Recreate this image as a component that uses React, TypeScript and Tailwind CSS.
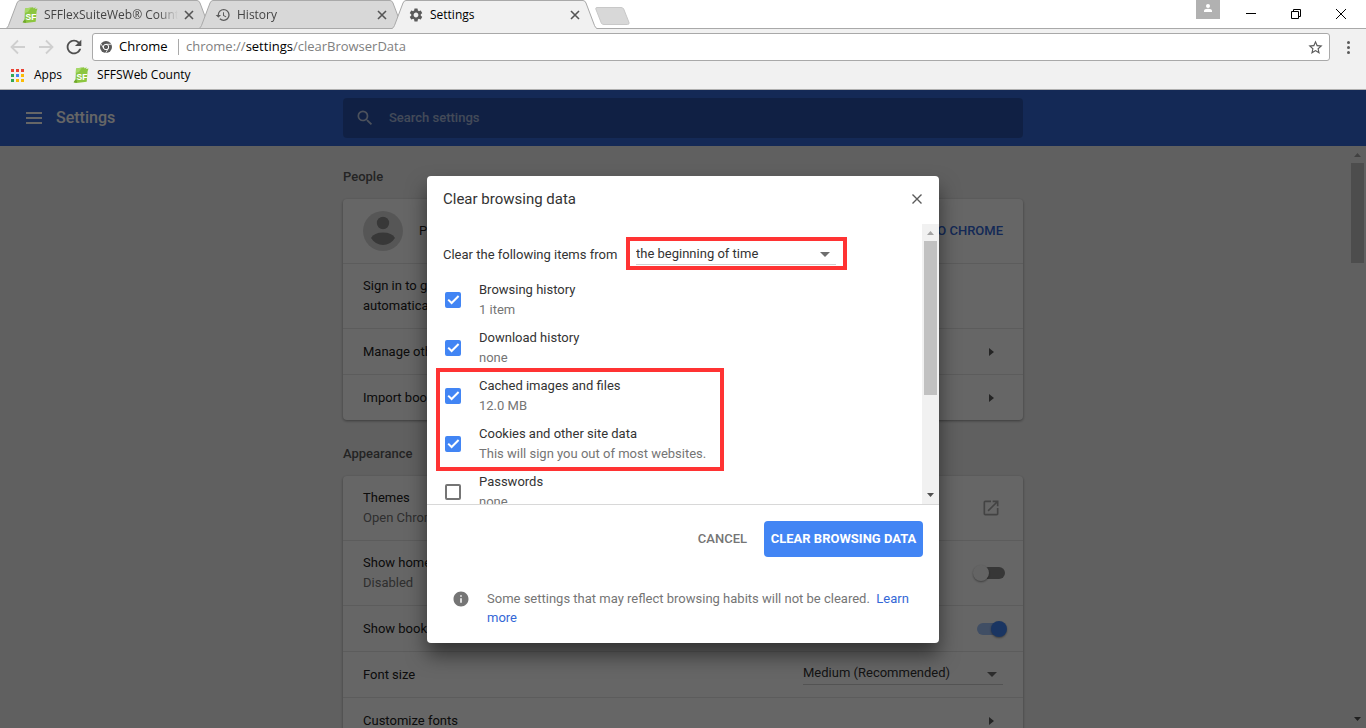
import type { ReactNode } from "react";
import { MdHistory, MdInfo, MdLaunch, MdRefresh, MdSearch, MdSettings, MdStarBorder } from "react-icons/md";

const clearItems = [
  { id: "browsing", label: "Browsing history", detail: "1 item", checked: true },
  { id: "downloads", label: "Download history", detail: "none", checked: true },
];

const flaggedItems = [
  { id: "cache", label: "Cached images and files", detail: "12.0 MB", checked: true },
  { id: "cookies", label: "Cookies and other site data", detail: "This will sign you out of most websites.", checked: true },
];

const appColors = [
  "bg-[#ea4335]", "bg-[#ea4335]", "bg-[#ea4335]",
  "bg-[#34a853]", "bg-[#4285f4]", "bg-[#fbbc05]",
  "bg-[#34a853]", "bg-[#fbbc05]", "bg-[#fbbc05]",
];

function SfIcon() {
  return (
    <svg viewBox="0 0 16 16" className="size-4 shrink-0" aria-hidden="true">
      <path d="M3 1.5 11 .3l.8 1.2L13.500 0l-.3 2 2.300-.4-.9 2.600-.9 10.500L3.600 16 .6 15.200l1.900-2.800z" fill="#8cc63f" />
      <path d="M3 1.500 9 .6 6 5 2.800 6z" fill="#a5d867" />
      <path d="M.6 15.200l2.100-2.800 1.300 1.500L3.600 16z" fill="#6fa52d" />
      <text x="3.500" y="13" fontSize="8.500" fontWeight="700" fill="#fff" fontFamily="Liberation Sans, sans-serif">
        SF
      </text>
    </svg>
  );
}

function ChromeIcon() {
  return (
    <svg viewBox="0 0 24 24" className="size-3 shrink-0" aria-hidden="true">
      <circle cx="12" cy="12" r="12" fill="#5a5a5a" />
      <circle cx="12" cy="12" r="5.4" fill="#5a5a5a" stroke="#fff" strokeWidth="2" />
      <path d="M12 6.6h11M7.3 14.7 2 5.6M16.7 14.7 11.3 24" stroke="#fff" strokeWidth="1.6" />
    </svg>
  );
}

function Tab({ icon, title, active }: { icon: ReactNode; title: string; active?: boolean }) {
  return (
    <div className={active ? "relative z-10 -mr-3 h-[29px] w-[205px]" : "relative -mr-3 h-[29px] w-[205px]"}>
      <svg viewBox="0 0 205 29" className="absolute inset-0 size-full" aria-hidden="true">
        <path
          d="M0 28.5Q1.5 28 2.5 25.5L11 3Q12 .5 14 .5H191Q193 .5 194 3L202.5 25.5Q203.5 28 205 28.5V29H0z"
          fill={active ? "#f1f1f1" : "#d8d8d8"}
        />
        <path
          d="M0 28.5Q1.5 28 2.5 25.5L11 3Q12 .5 14 .5H191Q193 .5 194 3L202.5 25.5Q203.5 28 205 28.5"
          fill="none"
          stroke="#a9a9a9"
        />
        {!active && <path d="M0 28.5h205" stroke="#a9a9a9" />}
      </svg>
      <div className="relative flex h-[29px] items-center pr-[17px] pl-4">
        <span className="flex w-[22px] text-[#5a5a5a]">{icon}</span>
        <span
          className={
            active
              ? "w-[134px] overflow-hidden text-xs whitespace-nowrap text-black"
              : "w-[134px] overflow-hidden mask-r-from-85% text-xs whitespace-nowrap text-[#444]"
          }
        >
          {title}
        </span>
        <button type="button" aria-label={`Close ${title}`} className="ml-auto text-[#555]">
          <svg viewBox="0 0 10 10" className="size-[10px]" stroke="currentColor" strokeWidth="1.6" aria-hidden="true">
            <path d="M1 1l8 8M9 1l-8 8" />
          </svg>
        </button>
      </div>
    </div>
  );
}

function TabStrip() {
  return (
    <div className="flex h-[29px] shrink-0 items-start border-b border-[#a9a9a9] bg-white pl-[6px]">
      <Tab icon={<SfIcon />} title="SFFlexSuiteWeb® County" />
      <Tab icon={<MdHistory className="size-4" />} title="History" />
      <Tab icon={<MdSettings className="size-4" />} title="Settings" active />
      <button type="button" aria-label="New tab" className="mt-[7px] ml-[10px]">
        <svg viewBox="0 0 35 18" className="h-[18px] w-[35px]" aria-hidden="true">
          <path d="M2 .5H26Q28 .5 28.7 2L34 15.5Q34.5 17.500 32.5 17.5H9Q7 17.5 6.3 16L.8 2Q.5.5 2 .5z" fill="#d8d8d8" stroke="#c8c8c8" />
        </svg>
      </button>
      <div className="ml-auto flex pr-[3px] text-black">
        <button type="button" aria-label="Profile" className="mr-2 flex h-[19px] w-6 items-start justify-center bg-[#b1b1b1] pt-1">
          <svg viewBox="0 0 8 8" className="size-2" fill="#fff" aria-hidden="true">
            <circle cx="4" cy="2" r="2" />
            <path d="M0 8V6.8Q0 4.800 4 4.800T8 6.800V8z" />
          </svg>
        </button>
        <button type="button" aria-label="Minimize" className="flex h-[27px] w-[45px] items-center justify-center">
          <svg viewBox="0 0 10 10" className="size-[10px]" stroke="currentColor" aria-hidden="true">
            <path d="M0 4.5h10" />
          </svg>
        </button>
        <button type="button" aria-label="Restore" className="flex h-[27px] w-[45px] items-center justify-center">
          <svg viewBox="0 0 10 10" className="size-[10px]" fill="none" stroke="currentColor" aria-hidden="true">
            <path d="M.5 2.500h7v7h-7zM2.500 2.500v-2h7v7h-2" />
          </svg>
        </button>
        <button type="button" aria-label="Close" className="flex h-[27px] w-[45px] items-center justify-center">
          <svg viewBox="0 0 10 10" className="size-[10px]" stroke="currentColor" aria-hidden="true">
            <path d="M0 0l10 10M10 0L0 10" />
          </svg>
        </button>
      </div>
    </div>
  );
}

function BrowserToolbar() {
  return (
    <div className="shrink-0 border-b border-[#b0b0b0] bg-[#f1f1f1] pt-1">
      <div className="flex h-7 items-center pr-4 pl-[10px]">
        <button type="button" aria-label="Back" className="mr-3 text-[#cfcfcf]">
          <svg viewBox="0 0 16 16" className="size-4" fill="none" stroke="currentColor" strokeWidth="1.8" aria-hidden="true">
            <path d="M15 8H2.5M8 1.5 1.5 8 8 14.5" />
          </svg>
        </button>
        <button type="button" aria-label="Forward" className="mr-[9px] text-[#cfcfcf]">
          <svg viewBox="0 0 16 16" className="size-4" fill="none" stroke="currentColor" strokeWidth="1.8" aria-hidden="true">
            <path d="M1 8h12.5M8 1.5 14.5 8 8 14.5" />
          </svg>
        </button>
        <button type="button" aria-label="Reload" className="mr-[7px] text-[#4f4f4f]">
          <MdRefresh className="size-[22px]" />
        </button>
        <div className="flex h-7 flex-1 items-center rounded-[3px] border border-[#a9a9a9] bg-white pr-[5px] pl-[7px] text-[13px]">
          <ChromeIcon />
          <span className="ml-[7px] w-[52px] text-black">Chrome</span>
          <span className="mx-[7px] h-4 w-px bg-[#a9a9a9]" />
          <div role="textbox" aria-label="Address" className="flex-1 text-[#808080]">
            chrome://<span className="text-black">settings</span>/clearBrowserData
          </div>
          <button type="button" aria-label="Bookmark this page" className="text-[#5a5a5a]">
            <MdStarBorder className="size-[17px]" />
          </button>
        </div>
        <button type="button" aria-label="Menu" className="ml-[17px] flex flex-col gap-[2px]">
          <span className="size-[3px] rounded-full bg-[#5a5a5a]" />
          <span className="size-[3px] rounded-full bg-[#5a5a5a]" />
          <span className="size-[3px] rounded-full bg-[#5a5a5a]" />
        </button>
      </div>
      <nav className="flex h-7 items-center gap-[11px] pl-[11px] text-xs text-black">
        <a href="#apps" className="flex items-center gap-[10px]">
          <span className="grid grid-cols-3 gap-[2px]">
            {appColors.map((color, i) => (
              <span key={i} className={`size-[3px] ${color}`} />
            ))}
          </span>
          Apps
        </a>
        <a href="#county" className="flex items-center gap-2">
          <SfIcon />
          SFFSWeb County
        </a>
      </nav>
    </div>
  );
}

function Row({ title, detail, children }: { title: string; detail?: string; children?: ReactNode }) {
  return (
    <div
      className={
        detail
          ? "flex h-[65px] items-center border-t border-black/10 px-5 first:h-16 first:border-t-0"
          : "flex h-[46px] items-center border-t border-black/10 px-5"
      }
    >
      <div className="flex-1">
        <div>{title}</div>
        {detail && <div className="text-[#757575]">{detail}</div>}
      </div>
      {children}
    </div>
  );
}

function ArrowRight() {
  return (
    <button type="button" aria-label="Open" className="flex w-6 justify-center text-[#5a5a5a]">
      <svg viewBox="0 0 5 8" className="h-2 w-[5px]" fill="currentColor" aria-hidden="true">
        <path d="M0 0l5 4-5 4z" />
      </svg>
    </button>
  );
}

function Dropdown({ id, value }: { id: string; value: string }) {
  return (
    <div className="relative w-[200px] border-b border-[#d0d0d0]">
      <select id={id} aria-label={id} className="block h-[21px] w-full appearance-none bg-transparent text-[#333] outline-none">
        <option>{value}</option>
      </select>
      <svg viewBox="0 0 10 5" className="pointer-events-none absolute top-[9px] right-[6px] h-[5px] w-[10px]" fill="#6e6e6e" aria-hidden="true">
        <path d="M0 0h10L5 5z" />
      </svg>
    </div>
  );
}

function Toggle({ label, on }: { label: string; on?: boolean }) {
  return (
    <input
      type="checkbox"
      role="switch"
      aria-label={label}
      defaultChecked={on}
      className="relative -mr-[2px] h-3 w-7 appearance-none rounded-full bg-[#8a8a8a] before:absolute before:-top-[2px] before:-left-1 before:size-4 before:rounded-full before:bg-[#fafafa] before:shadow-[0_1px_2px_rgba(0,0,0,0.4)] checked:bg-[#a0c2fa] checked:before:left-[14px] checked:before:bg-[#4285f4]"
    />
  );
}

function SettingsPage() {
  return (
    <>
      <header className="flex h-14 items-center bg-[#3367d6] text-white">
        <div className="flex-1">
          <div className="flex items-center pl-[26px]">
            <button type="button" aria-label="Main menu" className="mr-[14px] flex w-4 flex-col gap-[3px]">
              <span className="h-[2px] bg-white" />
              <span className="h-[2px] bg-white" />
              <span className="h-[2px] bg-white" />
            </button>
            <h1 className="text-base font-medium">Settings</h1>
          </div>
        </div>
        <label className="w-[680px] rounded-sm bg-black/20">
          <span className="flex h-10 items-center pl-3">
            <MdSearch className="mr-[14px] size-5 text-white/70" />
            <input
              type="text"
              aria-label="Search settings"
              placeholder="Search settings"
              className="flex-1 bg-transparent font-medium outline-none placeholder:text-white/60"
            />
          </span>
        </label>
        <div className="flex-1" />
      </header>
      <main className="mx-auto w-[680px] pt-[21px] text-[#212121]">
        <section>
          <h2 className="mb-3 font-medium text-[#5a5a5a]">People</h2>
          <div className="rounded-sm bg-white shadow-[0_1px_3px_rgba(0,0,0,0.4)]">
            <div className="flex h-16 items-center px-5">
              <svg viewBox="0 0 40 40" className="mr-4 size-10" aria-hidden="true">
                <circle cx="20" cy="20" r="20" fill="#d8d8d8" />
                <circle cx="20" cy="12" r="6.2" fill="#8c8c8c" />
                <path d="M8 27q3-5.5 12-5.5T32 27q-4.5 7-12 7T8 27z" fill="#8c8c8c" />
              </svg>
              <div className="flex-1">Person 1</div>
              <button type="button" className="font-medium text-[#3367d6]">SIGN IN TO CHROME</button>
            </div>
            <div className="flex h-[65px] items-center border-t border-black/10 px-5">
              <p>
                Sign in to get your bookmarks, history, passwords, and other settings on all your devices.
                <br />
                automatically
              </p>
            </div>
            <Row title="Manage other people">
              <ArrowRight />
            </Row>
            <Row title="Import bookmarks and settings">
              <ArrowRight />
            </Row>
          </div>
        </section>
        <section className="mt-6">
          <h2 className="mb-3 font-medium text-[#5a5a5a]">Appearance</h2>
          <div className="rounded-sm bg-white shadow-[0_1px_3px_rgba(0,0,0,0.4)]">
            <Row title="Themes" detail="Open Chrome Web Store">
              <button type="button" aria-label="Open themes" className="flex w-6 justify-center text-[#a8a8a8]">
                <MdLaunch className="size-5" />
              </button>
            </Row>
            <Row title="Show home button" detail="Disabled">
              <Toggle label="Show home button" />
            </Row>
            <Row title="Show bookmarks bar">
              <Toggle label="Show bookmarks bar" on />
            </Row>
            <Row title="Font size">
              <div className="pb-[2px]">
                <Dropdown id="font-size" value="Medium (Recommended)" />
              </div>
            </Row>
            <Row title="Customize fonts">
              <ArrowRight />
            </Row>
            <Row title="Page zoom" />
          </div>
        </section>
      </main>
    </>
  );
}

function Scrollbar({ thumb }: { thumb: string }) {
  return (
    <div className="flex h-full w-[17px] flex-col items-center bg-[#f1f1f1]">
      <svg viewBox="0 0 17 17" className="size-[17px] shrink-0" fill="#a3a3a3" aria-hidden="true">
        <path d="M5 11h7L8.5 7z" />
      </svg>
      <div className={thumb} />
      <svg viewBox="0 0 17 17" className="mt-auto size-[17px] shrink-0" fill="#505050" aria-hidden="true">
        <path d="M5 6h7l-3.5 4z" />
      </svg>
    </div>
  );
}

function ClearItem({ id, label, detail, checked }: { id: string; label: string; detail: string; checked: boolean }) {
  return (
    <label htmlFor={id} className="flex h-12 items-center">
      <span className="relative mr-[18px] ml-[2px] size-4">
        <input
          id={id}
          type="checkbox"
          defaultChecked={checked}
          className="peer block size-4 appearance-none rounded-[2px] border-2 border-[#757575] checked:border-[#4285f4] checked:bg-[#4285f4]"
        />
        <svg viewBox="0 0 16 16" className="pointer-events-none absolute inset-0 hidden size-4 peer-checked:block" fill="none" stroke="#fff" strokeWidth="2" aria-hidden="true">
          <path d="M3.2 7.600 6.600 11 13.600 4" />
        </svg>
      </span>
      <span>
        <span className="block">{label}</span>
        <span className="block text-[#757575]">{detail}</span>
      </span>
    </label>
  );
}

function ClearDataDialog() {
  return (
    <div role="dialog" aria-labelledby="dialog-title" className="w-[512px] rounded-sm bg-white text-[#333] shadow-[0_12px_20px_rgba(0,0,0,0.5)]">
      <div className="flex h-12 items-center justify-between pr-[17px] pb-[2px] pl-4">
        <h2 id="dialog-title" className="text-[15px]">Clear browsing data</h2>
        <button type="button" aria-label="Close dialog" className="text-[#5a5a5a]">
          <svg viewBox="0 0 10 10" className="size-[10px]" stroke="currentColor" strokeWidth="1.4" aria-hidden="true">
            <path d="M.5.5l9 9M9.5.5l-9 9" />
          </svg>
        </button>
      </div>
      <div className="flex h-[281px] overflow-hidden border-b border-[#d8d8d8]">
        <div className="flex-1 pl-4">
          <div className="flex h-[52px] items-start pt-[13px]">
            <label htmlFor="period" className="w-[193px] pt-2">Clear the following items from</label>
            <div className="relative pt-[6px]">
              <Dropdown id="period" value="the beginning of time" />
              <div className="pointer-events-none absolute top-0 -right-[11px] -bottom-[5px] -left-[10px] border-4 border-[#ff3333]" />
            </div>
          </div>
          {clearItems.map((item) => (
            <ClearItem key={item.id} {...item} />
          ))}
          <div className="relative">
            {flaggedItems.map((item) => (
              <ClearItem key={item.id} {...item} />
            ))}
            <div className="pointer-events-none absolute -top-1 -bottom-[3px] -left-[7px] w-72 border-4 border-[#ff3333]" />
          </div>
          <ClearItem id="passwords" label="Passwords" detail="none" checked={false} />
        </div>
        <Scrollbar thumb="h-[154px] w-[13px] bg-[#c1c1c1]" />
      </div>
      <div className="px-4 py-4">
        <div className="flex justify-end gap-[10px] font-medium">
          <button type="button" className="px-[7px] text-[#757575]">CANCEL</button>
          <button type="button" className="h-9 w-[159px] rounded-sm bg-[#4285f4] font-bold text-white">CLEAR BROWSING DATA</button>
        </div>
        <div className="mt-8 flex leading-[19px]">
          <MdInfo className="mt-px mr-[17px] ml-[9px] size-[18px] shrink-0 text-[#757575]" />
          <p className="text-[#757575]">
            Some settings that may reflect browsing habits will not be cleared. &nbsp;
            <a href="#learn" className="text-[#3367d6]">Learn more</a>
          </p>
        </div>
      </div>
    </div>
  );
}

export default function App() {
  return (
    <div className="flex h-screen flex-col overflow-hidden font-['Open_Sans',sans-serif]">
      <TabStrip />
      <BrowserToolbar />
      <div className="relative flex-1 overflow-hidden bg-[#f1f1f1] font-[Roboto,sans-serif] text-[13px] leading-5">
        <SettingsPage />
        <div className="absolute top-14 right-0 bottom-0">
          <Scrollbar thumb="h-[100px] w-[13px] bg-[#c1c1c1]" />
        </div>
        <div className="absolute inset-0 flex items-start justify-center bg-black/60 pt-[86px]">
          <ClearDataDialog />
        </div>
      </div>
    </div>
  );
}
